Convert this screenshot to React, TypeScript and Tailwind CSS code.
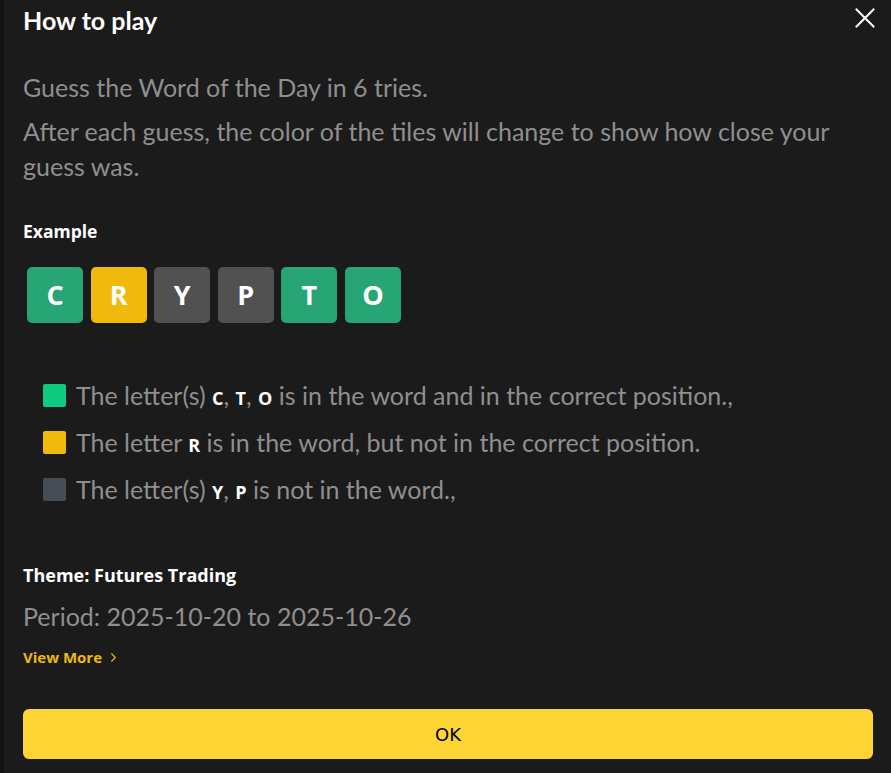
import { ChevronRight } from 'lucide-react';

type Tile = { letter: string; tone: 'hit' | 'near' | 'miss' };

const tiles: Tile[] = [
    { letter: 'C', tone: 'hit' },
    { letter: 'R', tone: 'near' },
    { letter: 'Y', tone: 'miss' },
    { letter: 'P', tone: 'miss' },
    { letter: 'T', tone: 'hit' },
    { letter: 'O', tone: 'hit' },
];

const tileBg = {
    hit: 'bg-[#27a575]',
    near: 'bg-[#f0b90b]',
    miss: 'bg-[#515151]',
};

const legend = [
    { swatch: 'bg-[#0ecb81]', pre: 'The letter(s) ', letters: ['C', 'T', 'O'], post: ' is in the word and in the correct position.,' },
    { swatch: 'bg-[#f0b90b]', pre: 'The letter ', letters: ['R'], post: ' is in the word, but not in the correct position.' },
    { swatch: 'bg-[#474d57]', pre: 'The letter(s) ', letters: ['Y', 'P'], post: ' is not in the word.,' },
];

const Letter = ({ children }: { children: string }) => (
    <span className="font-['Open_Sans',sans-serif] text-[18px] font-bold leading-none text-white">{children}</span>
);

const CloseIcon = () => (
    <svg width="20" height="20" viewBox="0 0 20 20" fill="none" stroke="currentColor" strokeWidth="2" strokeLinecap="square">
        <path d="M1.5 1.5L18.5 18.5M18.5 1.5L1.5 18.5" />
    </svg>
);

const App = () => {
    return (
        <div className="w-[891px] h-[773px] bg-[#1b1b1b] border-l-4 border-[#121316] overflow-hidden font-['Lato',sans-serif]">
            <div className="pl-[19px] pr-[18px] pt-[5px]">
                <div className="flex items-start justify-between">
                    <h2 className="text-[25px] font-bold text-white leading-[30px]">How to play</h2>
                    <button className="mt-[3px] mr-[-2px] text-white" aria-label="Close">
                        <CloseIcon />
                    </button>
                </div>

                <div className="mt-[35px] text-[25px] leading-[35px] text-[#8f8f8f]">
                    <p>Guess the Word of the Day in 6 tries.</p>
                    <p className="mt-[9px]">
                        After each guess, the color of the tiles will change to show how close your guess was.
                    </p>
                </div>

                <h3 className="mt-[35px] font-['Open_Sans',sans-serif] text-[17.5px] font-bold text-white leading-[24px]">
                    Example
                </h3>

                <div className="mt-[24px] ml-[4px] flex gap-[7.6px]">
                    {tiles.map((t, i) => (
                        <div
                            key={i}
                            className={`w-[56px] h-[56px] rounded-[5px] flex items-center justify-center font-['Open_Sans',sans-serif] text-[27px] font-bold text-white ${tileBg[t.tone]}`}
                        >
                            {t.letter}
                        </div>
                    ))}
                </div>

                <ul className="mt-[55px] ml-[20px] flex flex-col gap-[12px] text-[25px] leading-[35px] text-[#8f8f8f]">
                    {legend.map((row, i) => (
                        <li key={i} className="flex items-center gap-[10px] h-[35px]">
                            <span className={`w-[23px] h-[23px] rounded-[2px] shrink-0 ${row.swatch}`} />
                            <span>
                                {row.pre}
                                {row.letters.map((l, j) => (
                                    <span key={l}>
                                        {j > 0 && ', '}
                                        <Letter>{l}</Letter>
                                    </span>
                                ))}
                                {row.post}
                            </span>
                        </li>
                    ))}
                </ul>

                <h3 className="mt-[56px] font-['Open_Sans',sans-serif] text-[18px] font-bold text-white leading-[24px]">
                    Theme: Futures Trading
                </h3>
                <p className="mt-[13px] text-[25px] leading-[32px] text-[#8f8f8f]">Period: 2025-10-20 to 2025-10-26</p>
                <a className="mt-[15px] flex items-center gap-[4px] font-['Open_Sans',sans-serif] text-[15px] font-bold leading-[20px] text-[#f0b90b]">
                    View More
                    <ChevronRight className="w-[15px] h-[15px]" strokeWidth={1.75} />
                </a>

                <button className="mt-[42px] w-full h-[50px] rounded-[6px] bg-[#fcd535] text-black text-[18px] font-['DejaVu_Sans',sans-serif]">
                    OK
                </button>
            </div>
        </div>
    );
};

export default App;
